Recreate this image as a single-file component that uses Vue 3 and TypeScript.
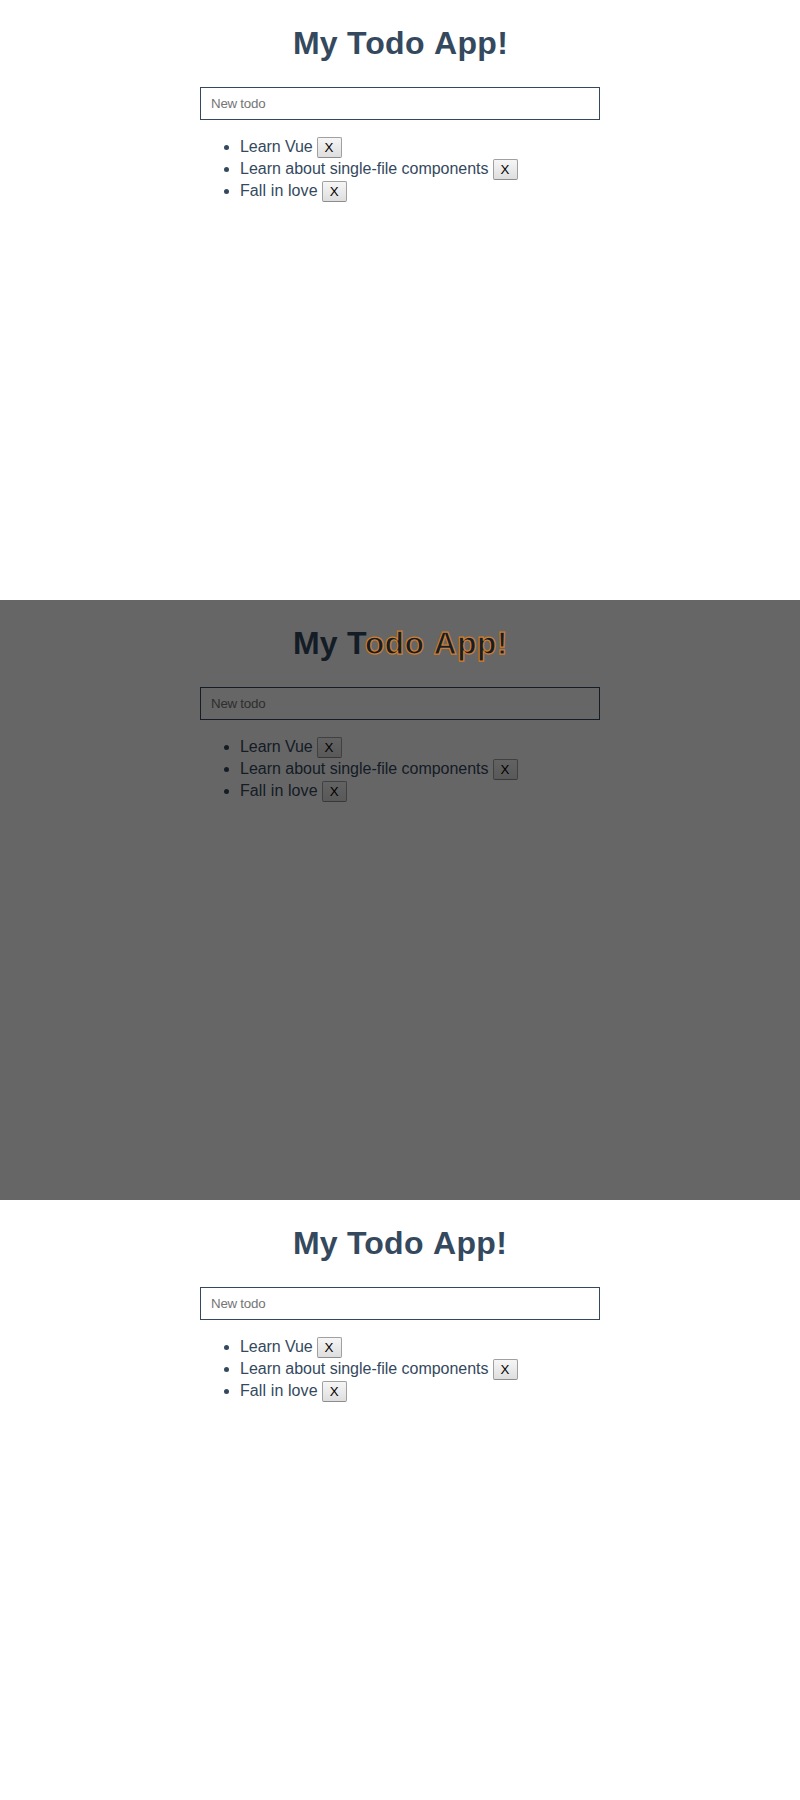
<script setup lang="ts">
interface Panel { id: string; kind: 'before' | 'diff' | 'after' }
interface Todo { text: string; fit: string }

const panels: Panel[] = [
  { id: 'a', kind: 'before' },
  { id: 'b', kind: 'diff' },
  { id: 'c', kind: 'after' },
]
const todos: Todo[] = [
  { text: 'Learn Vue', fit: 'tight' },
  { text: 'Learn about single-file components', fit: 'regular' },
  { text: 'Fall in love', fit: 'loose' },
]
</script>

<template>
  <section v-for="panel in panels" :key="panel.id" class="panel" :class="panel.kind">
    <main class="app">
      <h1><span class="start">My </span><span class="cap">T</span><span class="rest">odo <span class="last">App!</span></span></h1>
      <input class="new-todo" type="text" placeholder="New todo" />
      <ul>
        <li v-for="todo in todos" :key="todo.text">
          <span :class="todo.fit">{{ todo.text }}</span><button type="button">X</button>
        </li>
      </ul>
    </main>
  </section>
</template>

<style>
body { background: #fff; }
</style>

<style scoped>
.panel {
  position: relative;
  height: 600px;
  overflow: hidden;
  font-family: "Liberation Sans", Arial, sans-serif;
  font-size: 16px;
  color: #34495e;
}
.app { width: 400px; margin: 0 auto; }
h1 {
  margin: 23px 0 24px;
  padding-left: 1px;
  font-size: 32px;
  line-height: 40px;
  text-align: center;
  font-weight: 700;
  font-kerning: none;
  white-space: nowrap;
}
.start { letter-spacing: 0.22px; }
.cap { letter-spacing: -1.35px; }
.rest { letter-spacing: 0.36px; }
.last { letter-spacing: 0.28px; }
.after .rest { margin: 0 1px 0 -1px; }
.new-todo {
  display: block;
  box-sizing: border-box;
  width: 400px;
  height: 33px;
  margin: 0;
  padding: 10px;
  border: 1px solid #34495e;
  border-radius: 0;
  outline: none;
  background: #fff;
  font: 13.3333px "Liberation Sans", Arial, sans-serif;
  letter-spacing: -0.25px;
}
.new-todo::placeholder { color: #757575; }
ul { margin: 16px 0; padding-left: 40px; }
li { height: 22px; line-height: 22px; white-space: nowrap; }
.tight { letter-spacing: -0.07px; }
.regular { letter-spacing: -0.015px; }
.loose { letter-spacing: 0.1px; }
button {
  box-sizing: border-box;
  width: 25px;
  height: 21px;
  margin: 0 0 0 4.4px;
  padding: 0 1px 0 0;
  border: 1px solid #a0a0a0;
  border-bottom-color: #8c8c8c;
  border-radius: 2px;
  background: linear-gradient(#f6f6f6, #dedede);
  color: #000;
  font: 13.3333px "Liberation Sans", Arial, sans-serif;
}
.diff::after {
  content: "";
  position: absolute;
  z-index: 1;
  inset: 0;
  background: rgba(0, 0, 0, 0.6);
}
/* The changed letters are outlined above the dimming layer. */
.diff .rest {
  position: relative;
  z-index: 2;
  margin: 0 0.5px 0 -0.5px;
  color: #151d26;
  -webkit-text-stroke: 1.25px #cc7d2f;
}
</style>
